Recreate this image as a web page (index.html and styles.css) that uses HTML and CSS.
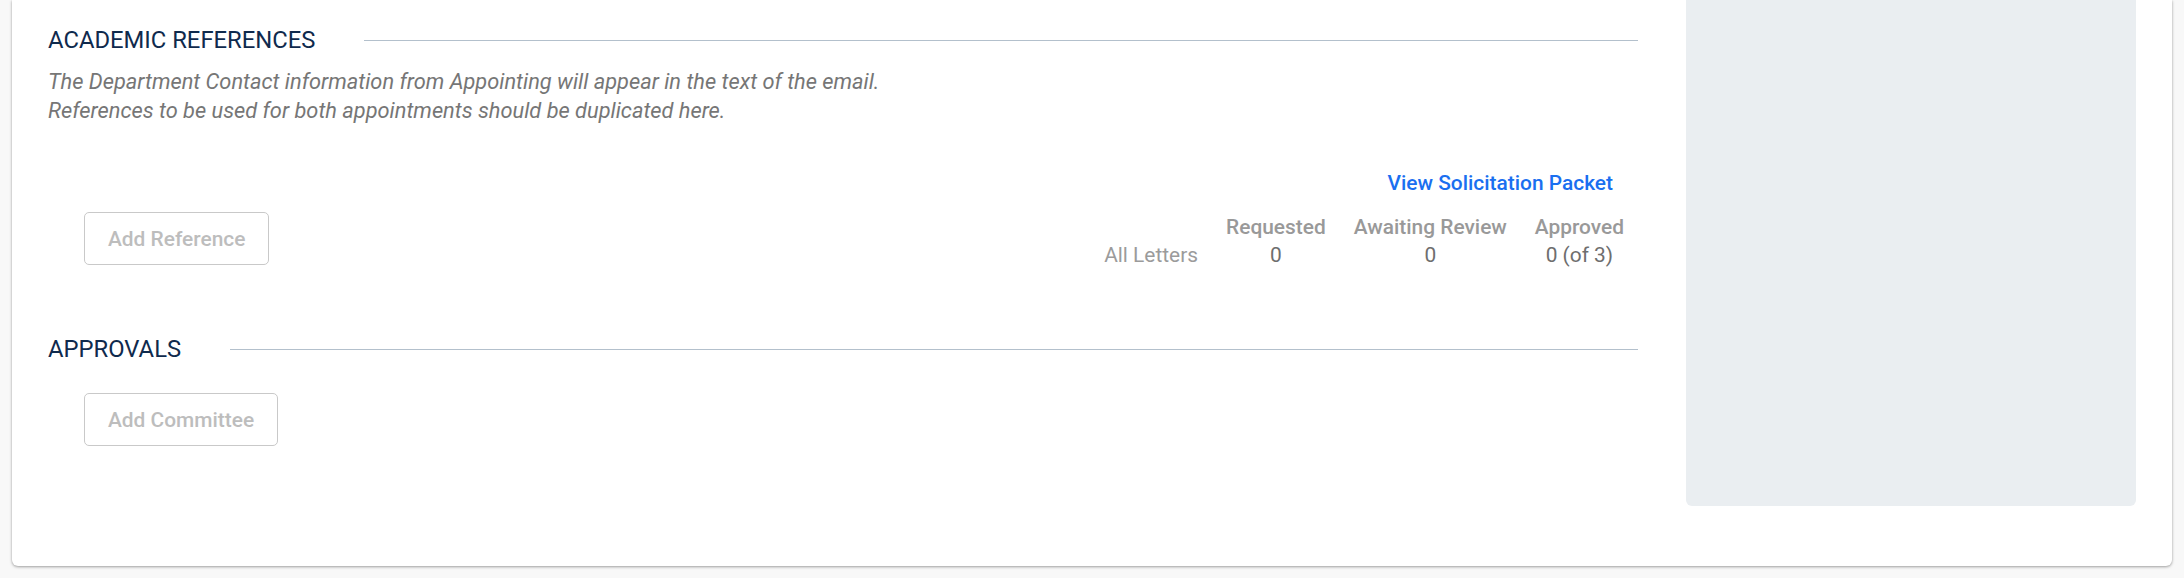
FILE: index.html
```html
<!DOCTYPE html>
<html lang="en">
<head>
<meta charset="utf-8">
<title>Academic References</title>
<link rel="stylesheet" href="styles.css">
</head>
<body>
<div class="page">
  <div class="card">
    <main class="main">
      <h2 class="section-title">ACADEMIC REFERENCES</h2>
      <p class="desc">The Department Contact information from Appointing will appear in the text of the email.<br>References to be used for both appointments should be duplicated here.</p>
      <div class="link-row"><a class="link" href="#">View Solicitation Packet</a></div>
      <div class="ref-row">
        <button class="btn btn-ref" type="button" disabled>Add Reference</button>
        <table class="stats">
          <thead>
            <tr><th class="label-cell"></th><th>Requested</th><th>Awaiting Review</th><th>Approved</th></tr>
          </thead>
          <tbody>
            <tr><td class="label-cell">All Letters</td><td>0</td><td>0</td><td>0 (of 3)</td></tr>
          </tbody>
        </table>
      </div>
      <h2 class="section-title approvals">APPROVALS</h2>
      <div class="committee-row">
        <button class="btn" type="button" disabled>Add Committee</button>
      </div>
    </main>
    <aside class="side"></aside>
  </div>
</div>
</body>
</html>
```
FILE: styles.css
```css
* { box-sizing: border-box; }
html, body { margin: 0; padding: 0; }
body {
  background: #f8f8f8;
  font-family: Roboto, "Liberation Sans", Arial, sans-serif;
  height: 578px;
  overflow: hidden;
}
.page { padding: 0 12px; }
.card {
  display: flex;
  gap: 48px;
  background: #ffffff;
  padding: 0 36px 60px 36px;
  border-radius: 0 0 6px 6px;
  box-shadow: 0 1px 3px rgba(0,0,0,0.35), 0 0 2px rgba(0,0,0,0.08);
}
.main {
  flex: 1;
  min-width: 0;
  padding-top: 25px;
  padding-bottom: 60px;
}
.side {
  width: 450px;
  flex: none;
  background: #eaeef1;
  border-radius: 0 0 6px 6px;
}
.section-title {
  display: flex;
  align-items: center;
  margin: 0;
  font-size: 23.8px;
  line-height: 30px;
  font-weight: 400;
  color: #0f2a4d;
}
.section-title::after {
  content: "";
  flex: 1;
  height: 1px;
  margin-left: 49px;
  background: #b3c0cc;
}
.desc {
  margin: 12px 0 0 0;
  font-size: 21.8px;
  line-height: 29px;
  font-style: italic;
  color: #767676;
}
.link-row {
  margin-top: 44px;
  text-align: right;
  padding-right: 25px;
  line-height: 28px;
}
.link {
  font-size: 20.9px;
  font-weight: 500;
  color: #1a6ff0;
  text-decoration: none;
}
.ref-row {
  display: flex;
  justify-content: space-between;
  align-items: center;
  margin-top: 13px;
  padding-left: 36px;
}
.btn {
  height: 53px;
  padding: 0 23px;
  border: 1px solid #c9c9c9;
  border-radius: 5px;
  background: #ffffff;
  font-family: Roboto, "Liberation Sans", Arial, sans-serif;
  font-size: 20.9px;
  font-weight: 500;
  color: #bdbdbd;
}
.btn-ref { margin-bottom: 5px; }
.stats {
  border-collapse: collapse;
  font-size: 20.9px;
  line-height: 28px;
}
.stats th, .stats td {
  padding: 0 14px;
  text-align: center;
  white-space: nowrap;
}
.stats th {
  font-weight: 500;
  color: #999999;
}
.stats td { color: #6e6e6e; }
.stats .label-cell {
  text-align: right;
  color: #9b9b9b;
}
.approvals { margin-top: 64px; }
.committee-row {
  margin-top: 29px;
  padding-left: 36px;
}
```
